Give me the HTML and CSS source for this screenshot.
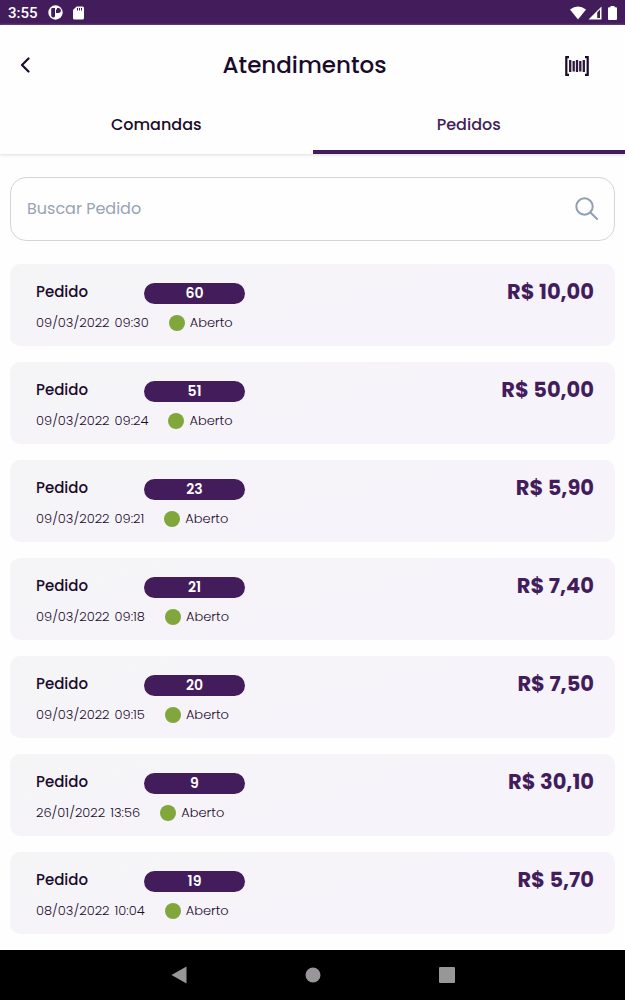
FILE: index.html
```
<!DOCTYPE html>
<html lang="pt-BR">
<head>
<meta charset="UTF-8">
<meta name="viewport" content="width=device-width, initial-scale=1.0">
<title>Atendimentos</title>
<link rel="stylesheet" href="styles.css">
</head>
<body>
<!-- Status bar -->
<div class="status-bar">
<span class="clock">3:55</span>
<svg class="app-icon" width="15" height="15" viewBox="0 0 15 15"><circle cx="7.5" cy="7.5" r="7.2" fill="#fff"/><path d="M3.2 4.2Q3.2 3 4.4 3H7v8.2Q7 12.4 5.1 12.4T3.2 10.600z" fill="#431d5b"/><path d="M8 3h2.300a2.300 2.300 0 0 1 0 5H8z" fill="#431d5b"/><path d="M8 3h1v1.500H8z" fill="#fff"/></svg>
<svg width="11" height="14" viewBox="0 0 11 14"><path d="M3.600 0.500H9.500Q11 0.500 11 2V12Q11 13.500 9.500 13.500H1.500Q0 13.500 0 12V4z" fill="#fff"/><path d="M4.500 2v2.500M6.500 2v2.500M8.500 2v2.500" stroke="#431d5b" stroke-width="1"/></svg>
<div class="signals">
<svg width="16" height="14" viewBox="0 0 16 14"><path d="M0 3.500Q8-2.500 16 3.500L8 13.500z" fill="#fff"/></svg>
<svg width="14" height="14" viewBox="0 0 14 14"><path d="M13.500 0.500V13.500H0.500z" fill="#fff"/><path d="M9.200 6.500L12 3.500V12H9.200z" fill="#431d5b"/></svg>
<svg class="battery" width="9" height="14" viewBox="0 0 9 14"><path d="M2.500 0h4v1.200H8q1 0 1 1V13q0 1-1 1H1q-1 0-1-1V2.200q0-1 1-1h1.500z" fill="#fff"/></svg>
</div>
</div>

<div class="top">
<header class="header">
<button class="icon-button" type="button" aria-label="Voltar">
<svg width="10" height="16" viewBox="0 0 10 16"><path d="M8.500 1.500L2 8l6.500 6.500" fill="none" stroke="#1b0b2b" stroke-width="2.200" stroke-linecap="round" stroke-linejoin="round"/></svg>
</button>
<h1>Atendimentos</h1>
<button class="icon-button scan" type="button" aria-label="Ler código de barras">
<svg width="24" height="22" viewBox="0 0 24 22"><path d="M4 3.200H1.300V20.800H4M20 3.200H22.700V20.800H20" fill="none" stroke="#1b0b2b" stroke-width="2.200"/><path d="M5.200 6V18M8.700 7V17.500M12 6V18M15.300 7V17.500M18.800 6V18" stroke="#2d173d" stroke-width="2.300"/></svg>
</button>
</header>

<div class="tabs" role="tablist">
<button class="tab" type="button" role="tab" aria-selected="false">Comandas</button>
<button class="tab active" type="button" role="tab" aria-selected="true">Pedidos</button>
</div>
</div>

<main>
<form class="search">
<input type="text" placeholder="Buscar Pedido" aria-label="Buscar Pedido">
<button class="icon-button" type="submit" aria-label="Buscar">
<svg width="24" height="24" viewBox="0 0 24 24"><g fill="none" stroke="#91a0b1" stroke-width="2" stroke-linecap="round"><circle cx="10.500" cy="9.500" r="8.200"/><path d="M16.500 15.500l6.500 6.500"/></g></svg>
</button>
</form>

<!-- Orders -->
<ul class="orders">
<li class="order">
<div class="order-top"><span class="label">Pedido</span><span class="number">60</span><strong class="price">R$ 10,00</strong></div>
<div class="order-info"><span>09/03/2022</span><span>09:30</span><span class="state">Aberto</span></div>
</li>
<li class="order">
<div class="order-top"><span class="label">Pedido</span><span class="number">51</span><strong class="price">R$ 50,00</strong></div>
<div class="order-info"><span>09/03/2022</span><span>09:24</span><span class="state">Aberto</span></div>
</li>
<li class="order">
<div class="order-top"><span class="label">Pedido</span><span class="number">23</span><strong class="price">R$ 5,90</strong></div>
<div class="order-info"><span>09/03/2022</span><span>09:21</span><span class="state">Aberto</span></div>
</li>
<li class="order">
<div class="order-top"><span class="label">Pedido</span><span class="number">21</span><strong class="price">R$ 7,40</strong></div>
<div class="order-info"><span>09/03/2022</span><span>09:18</span><span class="state">Aberto</span></div>
</li>
<li class="order">
<div class="order-top"><span class="label">Pedido</span><span class="number">20</span><strong class="price">R$ 7,50</strong></div>
<div class="order-info"><span>09/03/2022</span><span>09:15</span><span class="state">Aberto</span></div>
</li>
<li class="order">
<div class="order-top"><span class="label">Pedido</span><span class="number">9</span><strong class="price">R$ 30,10</strong></div>
<div class="order-info"><span>26/01/2022</span><span>13:56</span><span class="state">Aberto</span></div>
</li>
<li class="order">
<div class="order-top"><span class="label">Pedido</span><span class="number">19</span><strong class="price">R$ 5,70</strong></div>
<div class="order-info"><span>08/03/2022</span><span>10:04</span><span class="state">Aberto</span></div>
</li>
</ul>
</main>

<!-- System navigation -->
<nav class="system-nav">
<button class="icon-button" type="button" aria-label="Voltar"><svg width="16" height="18" viewBox="0 0 16 18"><path d="M15.500 0.500V17.500L0.500 9z" fill="#999699"/></svg></button>
<button class="icon-button" type="button" aria-label="Início"><svg width="16" height="16" viewBox="0 0 16 16"><circle cx="8" cy="8" r="7.500" fill="#999699"/></svg></button>
<button class="icon-button" type="button" aria-label="Recentes"><svg width="16" height="16" viewBox="0 0 16 16"><rect width="16" height="16" rx="1" fill="#999699"/></svg></button>
</nav>
</body>
</html>
```

FILE: styles.css
```
* {
box-sizing: border-box;
}
body {
font-family: Poppins, Inter, sans-serif;
margin: 0;
min-height: 100vh;
display: flex;
flex-direction: column;
background-color: #fefefe;
color: #1b0b2b;
}
button, input {
font-family: inherit;
color: inherit;
border: none;
background: none;
padding: 0;
}
button {
cursor: pointer;
}
svg {
display: block;
}

/* Status bar */
.status-bar {
display: flex;
align-items: center;
height: 25px;
padding: 0 8px;
background-color: #431d5b;
color: white;
}
.clock {
font-family: Roboto, sans-serif;
font-size: 15px;
font-weight: 500;
}
.app-icon {
margin: 0 10px;
}
.signals {
display: flex;
gap: 2px;
margin-left: auto;
}
.battery {
margin-left: 4px;
}

/* Header */
.top {
box-shadow: 0 1px 3px #dcdbe2;
}
.header {
display: grid;
grid-template-columns: 40px 1fr 56px;
align-items: center;
height: 80px;
padding: 0 20px;
}
.header h1 {
margin: 0;
text-align: center;
font-size: 23px;
line-height: 32px;
font-weight: 500;
}
.icon-button {
display: flex;
align-items: center;
justify-content: center;
}
.header .icon-button {
justify-self: start;
}
.header .scan {
justify-self: center;
}

/* Tabs */
.tabs {
display: flex;
}
.tab {
flex: 1;
padding: 8px 0 13px;
border-bottom: 4px solid transparent;
font-size: 16px;
line-height: 24px;
font-weight: 500;
}
.tab.active {
color: #431d5b;
border-color: #431d5b;
}

main {
flex: 1;
padding: 23px 10px 16px;
}

/* Search */
.search {
display: flex;
align-items: center;
height: 64px;
padding: 0 16px;
border: 1px solid #d5d4d9;
border-radius: 16px;
}
.search input {
flex: 1;
min-width: 0;
font-size: 16px;
line-height: 24px;
outline: none;
}
.search input::placeholder {
color: #98a3b3;
opacity: 1;
}

/* Orders */
.orders {
display: flex;
flex-direction: column;
gap: 16px;
margin: 23px 0 0;
padding: 0;
list-style: none;
}
.order {
padding: 16px 21px 13px 26px;
border-radius: 10px;
background: linear-gradient(165deg, #f5f5f6, #f6f3fa 60%);
}
.order-top {
display: flex;
align-items: flex-end;
height: 24px;
}
.label {
width: 108px;
font-size: 15px;
line-height: 24px;
font-weight: 500;
}
.number {
width: 101px;
border-radius: 12px;
background-color: #431d5b;
color: white;
font-size: 14px;
line-height: 21px;
font-weight: 600;
text-align: center;
}
.price {
margin-left: auto;
color: #431d5b;
font-size: 21px;
line-height: 24px;
font-weight: 700;
}
.order-info {
display: flex;
align-items: center;
gap: 5px;
margin-top: 9px;
font-size: 13px;
line-height: 20px;
font-weight: 300;
}
.state {
display: flex;
align-items: center;
gap: 5px;
margin-left: 15px;
}
.state::before {
content: "";
width: 16px;
height: 16px;
border-radius: 50%;
background-color: #81a63b;
}

/* System navigation */
.system-nav {
display: flex;
align-items: center;
justify-content: center;
gap: 118px;
height: 50px;
background-color: #000;
}
```
